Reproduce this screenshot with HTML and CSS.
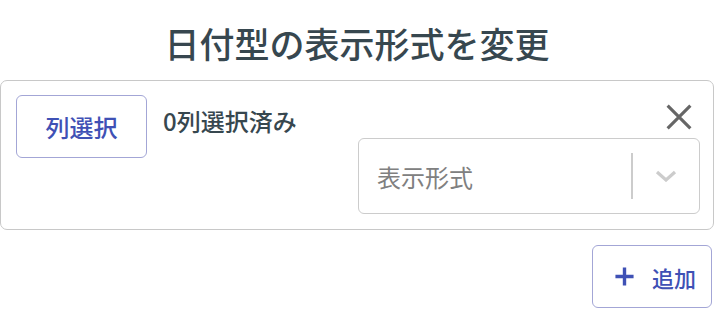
FILE: index.html
```html
<!DOCTYPE html>
<html lang="ja">
<head>
<meta charset="utf-8">
<link rel="stylesheet" href="styles.css">
</head>
<body>
<h1 class="title">日付型の表示形式を変更</h1>
<div class="card">
  <button class="btn btn-select">列選択</button>
  <div class="count">0列選択済み</div>
  <div class="right">
    <div class="close-row">
      <svg class="close" viewBox="0 0 24 24" width="42" height="42"><path d="M5.5 5.5 L18.5 18.5 M18.5 5.5 L5.5 18.5" stroke="#666" stroke-width="1.8" fill="none"/></svg>
    </div>
    <div class="select">
      <span class="placeholder">表示形式</span>
      <span class="sep"></span>
      <span class="indicator">
        <svg viewBox="0 0 22 12" width="22" height="12"><path d="M2 2 L11 10 L20 2" stroke="#cccccc" stroke-width="3.2" fill="none" stroke-linejoin="miter"/></svg>
      </span>
    </div>
  </div>
</div>
<div class="actions">
  <button class="btn btn-add">
    <svg viewBox="0 0 24 24" width="29" height="29"><path d="M12 4.5 V19.5 M4.5 12 H19.5" stroke="#3f51b5" stroke-width="2.8" fill="none"/></svg>
    <span>追加</span>
  </button>
</div>
</body>
</html>
```

FILE: styles.css
```css
* { box-sizing: border-box; }
html, body {
  margin: 0;
  padding: 0;
  background: #ffffff;
  font-family: "Noto Sans CJK JP", "Noto Sans", sans-serif;
  color: #37474f;
}
.title {
  margin: 0;
  padding-top: 23px;
  height: 80px;
  font-size: 35px;
  line-height: 40px;
  font-weight: 500;
  text-align: center;
  color: #37474f;
}
.card {
  display: flex;
  align-items: flex-start;
  width: 714px;
  border: 1px solid #c8c8c8;
  border-radius: 7px;
  padding: 14px 13px 15px 15px;
}
.btn {
  font-family: inherit;
  font-weight: 500;
  background: #ffffff;
  border: 1px solid #a3a6d6;
  border-radius: 6px;
  color: #3f51b5;
  cursor: pointer;
}
.btn-select {
  width: 131px;
  height: 63px;
  font-size: 24px;
  padding: 0;
  line-height: 1;
}
.count {
  flex: 1;
  margin-left: 16px;
  padding-top: 8px;
  font-size: 24px;
  font-weight: 500;
  line-height: 36px;
  color: #37474f;
}
.right {
  width: 342px;
  display: flex;
  flex-direction: column;
}
.close-row {
  display: flex;
  justify-content: flex-end;
  height: 43px;
  padding-top: 1px;
}
.close { display: block; }
.select {
  display: flex;
  align-items: center;
  height: 76px;
  border: 1px solid #cccccc;
  border-radius: 6px;
}
.placeholder {
  flex: 1;
  padding-left: 18px;
  font-size: 24px;
  color: #808080;
}
.sep {
  width: 2px;
  height: 46px;
  background: #cccccc;
}
.indicator {
  width: 66px;
  display: flex;
  justify-content: center;
  align-items: center;
}
.indicator svg { display: block; }
.actions {
  display: flex;
  justify-content: flex-end;
  padding-top: 15px;
  padding-right: 2px;
}
.btn-add {
  display: flex;
  align-items: center;
  width: 120px;
  height: 63px;
  padding: 0 0 0 17px;
  font-size: 22px;
}
.btn-add svg { display: block; }
.btn-add span { margin-left: 13px; }
```
